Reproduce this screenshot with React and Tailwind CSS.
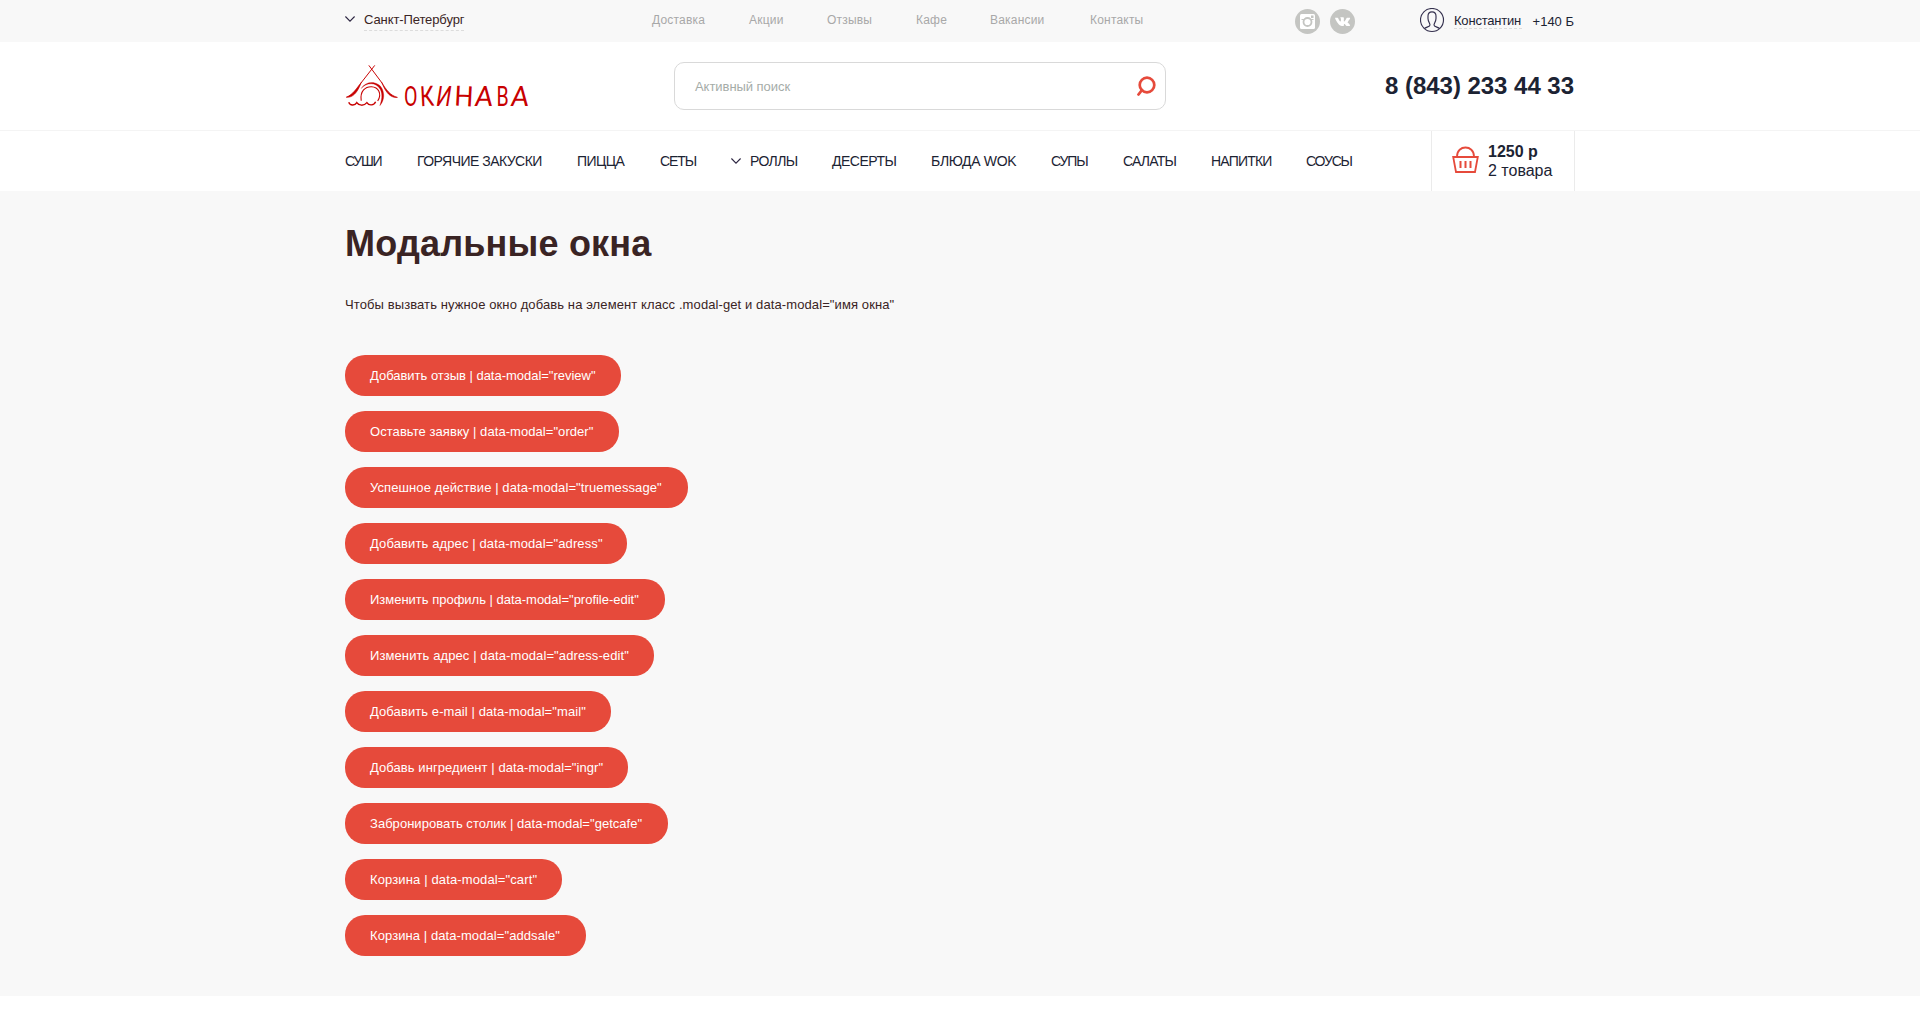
const topLinks = [
  ['Доставка', 'w-[97px]'],
  ['Акции', 'w-[78px]'],
  ['Отзывы', 'w-[89px]'],
  ['Кафе', 'w-[74px]'],
  ['Вакансии', 'w-[100px]'],
  ['Контакты', 'w-[60px]'],
];

const menu = [
  ['СУШИ', 'w-[72px] tracking-[-1.3px]'],
  ['ГОРЯЧИЕ ЗАКУСКИ', 'w-[160px] tracking-[-0.53px]'],
  ['ПИЦЦА', 'w-[83px] tracking-[-0.6px]'],
  ['СЕТЫ', 'w-[71px] tracking-[-1.1px]'],
  ['РОЛЛЫ', 'w-[101px] tracking-[-0.6px]', true],
  ['ДЕСЕРТЫ', 'w-[99px] tracking-[-0.5px]'],
  ['БЛЮДА WOK', 'w-[120px] tracking-[-0.3px]'],
  ['СУПЫ', 'w-[72px] tracking-[-1.1px]'],
  ['САЛАТЫ', 'w-[88px] tracking-[-0.8px]'],
  ['НАПИТКИ', 'w-[95px] tracking-[-0.8px]'],
  ['СОУСЫ', 'w-[60px] tracking-[-1.2px]'],
];

const modals = [
  ['Добавить отзыв', 'review', 'w-[276px] tracking-[-0.02px]'],
  ['Оставьте заявку', 'order', 'w-[274px] tracking-[0.06px]'],
  ['Успешное действие', 'truemessage', 'w-[343px] tracking-[0.1px]'],
  ['Добавить адрес', 'adress', 'w-[282px] tracking-[0.12px]'],
  ['Изменить профиль', 'profile-edit', 'w-[320px] tracking-[-0.01px]'],
  ['Изменить адрес', 'adress-edit', 'w-[309px] tracking-[0.1px]'],
  ['Добавить e-mail', 'mail', 'w-[266px] tracking-[0.09px]'],
  ['Добавь ингредиент', 'ingr', 'w-[283px] tracking-[0.07px]'],
  ['Забронировать столик', 'getcafe', 'w-[323px] tracking-[0.03px]'],
  ['Корзина', 'cart', 'w-[217px] tracking-[0.13px]'],
  ['Корзина', 'addsale', 'w-[241px] tracking-[0.08px]'],
];

const wordmark = [
  ['О', 'w-[15px]', 'scale-x-[.7]'],
  ['К', 'w-[17px]', 'scale-x-[.78] -rotate-3'],
  ['И', 'w-[18px]', 'scale-x-[.75] -skew-x-12'],
  ['Н', 'w-[21px]', 'scale-x-[.95] rotate-3'],
  ['А', 'w-[21px]', '-skew-x-6'],
  ['В', 'w-[15px]', 'scale-x-[.7]'],
  ['А', 'w-[21px]', '-skew-x-6'],
];

function Chevron({ className }) {
  return (
    <svg className={className} width="10" height="6" viewBox="0 0 10 6" fill="none" stroke="#2b2440" strokeWidth="1.1">
      <path d="M.4.5 5 5.1 9.6.5" />
    </svg>
  );
}

function Logo() {
  return (
    <a className="flex h-[44px] w-[186px] items-end text-[#c80000]">
      <svg width="54" height="44" viewBox="0 0 54 44" fill="none" stroke="currentColor">
        <path d="M24.300 1 38 19.300" strokeWidth="1" />
        <path d="M30.300 1 16 19.300" strokeWidth="1" />
        <path d="M37.500 18.500C42 26 46 31.500 53.400 33.600C47 34.200 42 30 37.500 18.500Z" fill="currentColor" strokeWidth=".7" />
        <path d="M16.500 18.500C12 24 8 31 1.300 33.400C8 34 12.500 29 16.500 18.500Z" fill="currentColor" strokeWidth=".7" />
        <path d="M16.500 24.500C22 16 34 17 38 25C41 32 39 38 35.500 42C37.500 36 38.500 31 36 25.500C32 18 22 18 16.500 24.500Z" fill="currentColor" strokeWidth=".3" />
        <path d="M16.500 37C15 27 21 22.500 27 22.700C34 23 38 30 33.300 37.300" strokeWidth="1.100" />
        <path d="M3.800 38.500C5 42 10 42.300 12 39C14 42.300 19.500 42.500 22.300 39C24.500 42.300 29.500 42 31.200 38" strokeWidth="1.400" />
      </svg>
      <span className="ml-[5px] flex h-[22px] items-center font-['Roboto'] text-[28px] leading-[22px]">
        {wordmark.map(([letter, cell, shape], i) => (
          <span key={i} className={`flex shrink-0 justify-center ${cell}`}>
            <span className={`inline-block ${shape}`}>{letter}</span>
          </span>
        ))}
      </span>
    </a>
  );
}

function TopBar() {
  return (
    <div className="h-[42px] bg-[#f8f8f8]">
      <div className="mx-auto flex h-full w-[1230px] items-start">
        <div className="flex w-[307px] items-start">
          <Chevron className="mt-[16px] mr-[9px]" />
          <a className="h-[31px] border-b border-dashed border-[#dcdcdc] pt-2 leading-[23px] tracking-[-0.1px] text-[#3a2424]">Санкт-Петербург</a>
        </div>
        <nav className="flex w-[643px] pt-[9px] text-[12px] leading-[23px] tracking-[0.2px] text-[#a8a8a8]">
          {topLinks.map(([label, width]) => (
            <a key={label} className={width}>{label}</a>
          ))}
        </nav>
        <div className="flex w-[125px] gap-[10px] pt-[9px]">
          <svg width="25" height="25" viewBox="0 0 25 25">
            <circle cx="12.500" cy="12.500" r="12.500" fill="#c4c5c2" />
            <rect x="5" y="5" width="15" height="15" rx="1.500" fill="#fff" />
            <circle cx="12.500" cy="13" r="4" fill="none" stroke="#c4c5c2" strokeWidth="1.800" />
            <path d="M6.500 10.500h3M15.500 10.500h3" stroke="#c4c5c2" strokeWidth="1" />
            <rect x="16" y="6.500" width="2.500" height="2.500" fill="#c4c5c2" />
          </svg>
          <svg width="25" height="25" viewBox="0 0 25 25">
            <circle cx="12.500" cy="12.500" r="12.500" fill="#c4c5c2" />
            <path transform="translate(5 5) scale(.63)" fill="#fff" d="M13.162 18.994c.609 0 .858-.406.851-.915-.031-1.917.714-2.949 2.059-1.604 1.488 1.488 1.796 2.519 3.603 2.519h3.200c.808 0 1.126-.26 1.126-.668 0-.863-1.421-2.386-2.625-3.504-1.686-1.565-1.765-1.602-.313-3.486 1.801-2.339 4.157-5.336 2.073-5.336h-3.981c-.772 0-.828.435-1.103 1.083-.995 2.347-2.886 5.387-3.604 4.922-.751-.485-.407-2.406-.35-5.261.015-.754.011-1.271-1.141-1.539-.629-.145-1.241-.205-1.809-.205-2.273 0-3.841.953-2.950 1.119 1.571.293 1.420 3.692 1.054 5.160-.638 2.556-3.036-2.024-4.035-4.305-.241-.548-.315-.974-1.175-.974H.787C.298 6 0 6.160 0 6.516c0 .602 2.960 6.827 5.786 9.770 2.756 2.870 5.480 2.708 7.376 2.708z" />
          </svg>
        </div>
        <div className="flex flex-1 items-start pr-px text-[#1c2333]">
          <svg className="mt-[8px]" width="25" height="25" viewBox="0 0 25 25" fill="none" stroke="#34304e" strokeWidth="1.150">
            <circle cx="12" cy="12" r="11.500" />
            <path d="M4.500 20.500C6 19 10 19 10 17C10 15.500 8 13.500 8 10.500V8C8 2.500 16 2.500 16 8V10.500C16 13.500 14 15.500 14 17C14 19 18 19 19.500 20.500" />
          </svg>
          <a className="ml-[9px] h-[29px] w-[68px] border-b border-dashed border-[#dcdcdc] pt-[9px] leading-[23px] tracking-[-0.2px] whitespace-nowrap">Константин</a>
          <span className="ml-auto pt-[10px] leading-[23px]">+140 Б</span>
        </div>
      </div>
    </div>
  );
}

function Header() {
  return (
    <div className="h-[89px] border-b border-[#f4f4f4] bg-white">
      <div className="mx-auto flex h-full w-[1230px] items-start">
        <div className="w-[329px] pt-[22px]"><Logo /></div>
        <div className="mt-[20px] flex h-[48px] w-[492px] items-center justify-between rounded-[10px] border border-[#d9d9d9] pr-[8px] pl-[20px]">
          <span className="pt-px tracking-[-0.05px] text-[#a5aca8]">Активный поиск</span>
          <svg width="20" height="21" viewBox="0 0 20 21" fill="none" stroke="#e64a3b">
            <circle cx="10" cy="9" r="7.300" strokeWidth="2.700" />
            <path d="M5 14 1.500 18.500" strokeWidth="2.800" strokeLinecap="round" />
          </svg>
        </div>
        <div className="ml-auto pt-[29px] pr-px text-[24px] leading-[30px] font-bold tracking-[-0.03px] text-[#1c2333]">8 (843) 233 44 33</div>
      </div>
    </div>
  );
}

function Menu() {
  return (
    <div className="h-[60px] bg-white">
      <div className="mx-auto flex h-full w-[1230px]">
        <nav className="flex w-[1086px] items-center text-[14px] text-[#1c2333]">
          {menu.map(([label, style, arrow]) => (
            <a key={label} className={`flex shrink-0 items-center whitespace-nowrap ${style}`}>
              {arrow && <Chevron className="mr-[9px]" />}
              {label}
            </a>
          ))}
        </nav>
        <div className="flex flex-1 items-center border-x border-[#ebebeb] pl-[20px]">
          <svg className="-mt-[2px]" width="27" height="28" viewBox="0 0 27 28" fill="none" stroke="#e64a3b" strokeWidth="1.800">
            <path d="M5 10.500C5 -1.500 22 -1.500 22 10.500" />
            <path d="M1.200 11h24.600L23 26H4Z" />
            <path d="M8.500 15v7M13.500 15v7M18.500 15v7" strokeWidth="2" />
          </svg>
          <div className="ml-[9px] text-[16px] leading-[19px] text-[#1c2333]">
            <div className="font-bold">1250 р</div>
            <div>2 товара</div>
          </div>
        </div>
      </div>
    </div>
  );
}

export default function App() {
  return (
    <div className="h-[1024px] overflow-hidden bg-white font-['Liberation_Sans',Arial,sans-serif] text-[13px]">
      <TopBar />
      <Header />
      <Menu />
      <main className="h-[805px] bg-[#f8f8f8] text-[#3a2424]">
        <div className="mx-auto w-[1230px]">
          <h1 className="pt-[30px] text-[36px] leading-[46px] font-bold tracking-[0.2px]">Модальные окна</h1>
          <p className="mt-[28px] leading-[20px] tracking-[0.1px]">
            Чтобы вызвать нужное окно добавь на элемент класс .modal-get и data-modal="имя окна"
          </p>
          <div className="mt-[40px] flex flex-col items-start gap-[15px]">
            {modals.map(([label, name, style]) => (
              <button key={name} className={`h-[41px] rounded-[20px] bg-[#e64a3b] px-[25px] text-left whitespace-nowrap text-white ${style}`}>
                {label} | data-modal="{name}"
              </button>
            ))}
          </div>
        </div>
      </main>
    </div>
  );
}
